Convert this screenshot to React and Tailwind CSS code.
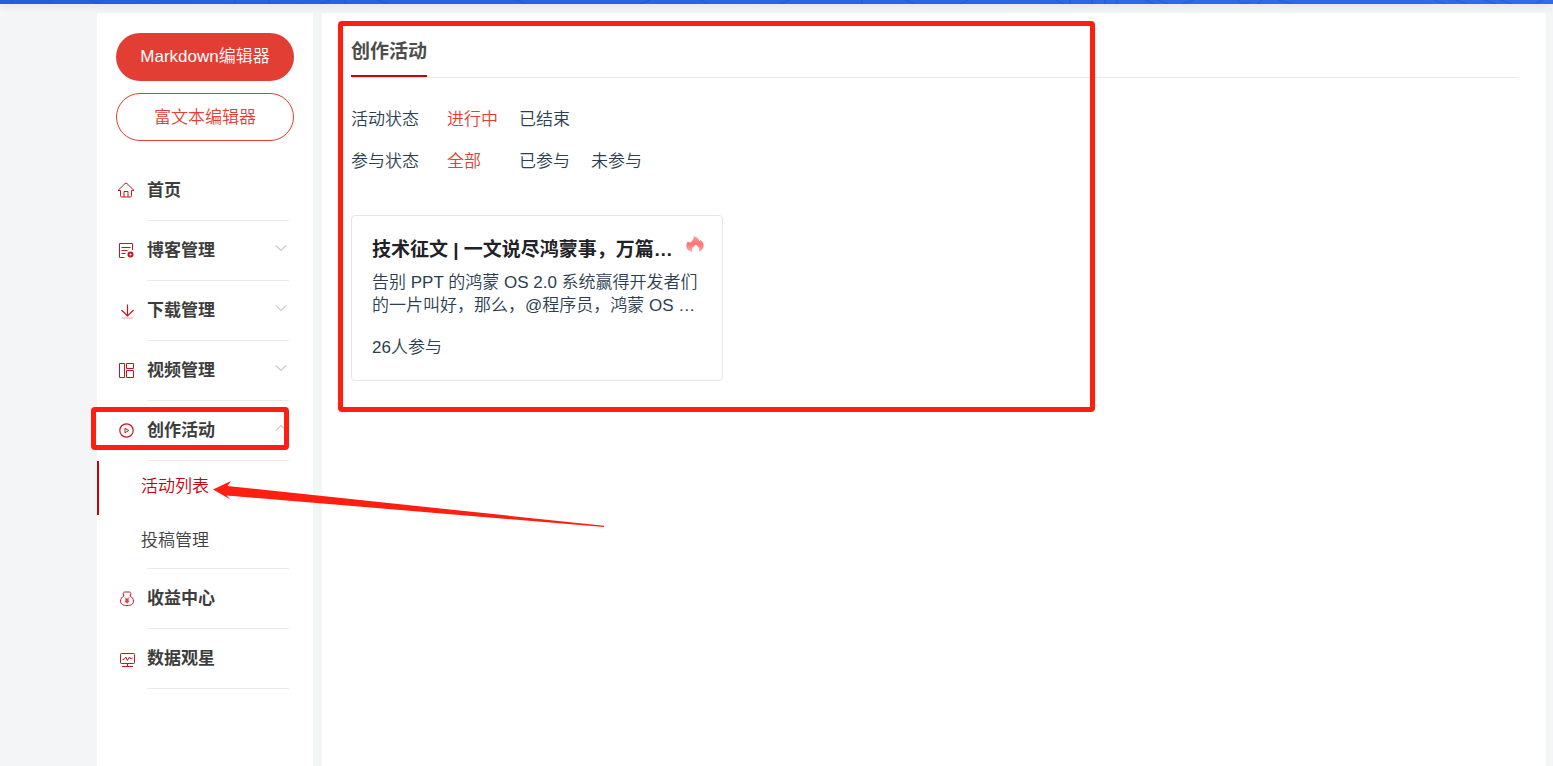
const HomeIcon = () => (
  <svg width="18" height="18" viewBox="0 0 18 18" fill="none" stroke="#c7141e">
    <path d="M1 9.500 8 2.600a1.400 1.400 0 0 1 2 0L17 9.500h-2.500M1 9.500h2.500v5.200a1.300 1.300 0 0 0 1.300 1.300h8.400a1.300 1.300 0 0 0 1.300-1.300V9.500" />
    <path d="M7 16v-5.500h4V16" />
  </svg>
);

const BlogIcon = () => (
  <svg width="18" height="18" viewBox="0 0 18 18" fill="none" stroke="#c7141e">
    <path d="M7.500 16.500h-5v-14h13v6.500M4.500 6.500h9M4.500 9.500h6M4.500 12.500h4" />
    <circle cx="13.500" cy="13.500" r="2" strokeWidth="2" />
  </svg>
);

const DownloadIcon = () => (
  <svg width="18" height="18" viewBox="0 0 18 18" fill="none" stroke="#c7141e">
    <path d="M10.500 3.500v11M4.500 9l6 6 6-6" strokeWidth="1.200" />
    <path d="M5 17h11" stroke="#eba1a5" />
  </svg>
);

const VideoIcon = () => (
  <svg width="18" height="18" viewBox="0 0 18 18" fill="none" stroke="#c7141e">
    <path d="M2.500 2.500h5v14h-5zM9.500 2.500h7v5h-7zM9.500 9.500h7v7h-7z" />
  </svg>
);

const ActivityIcon = () => (
  <svg width="18" height="18" viewBox="0 0 18 18" fill="none" stroke="#c7141e">
    <circle cx="9.500" cy="9.500" r="6.700" strokeWidth="1.200" />
    <path d="M8 7.300v4.400l3.800-2.200z" />
  </svg>
);

const IncomeIcon = () => (
  <svg width="18" height="18" viewBox="0 0 18 18" fill="none" stroke="#c7141e">
    <path d="M7 7.200 6 4.400 7.500 3h5L14 4.400l-1 2.800" />
    <path d="M7 6.800c-2 1.200-3.500 3.100-3.500 5.400 0 3 2.500 4.300 6.500 4.300s6.500-1.300 6.500-4.300c0-2.300-1.500-4.200-3.500-5.400" />
    <path d="m8 8.500 2 2 2-2M10 10.500v4M7.800 11h4.400M7.800 12.800h4.400" />
  </svg>
);

const DataIcon = () => (
  <svg width="18" height="18" viewBox="0 0 18 18" fill="none" stroke="#c7141e">
    <rect x="3.500" y="4.500" width="14" height="10" rx="0.800" />
    <path d="M5.500 10.500h1.500l1.800-2.500 1.700 3.500 2-3.500 1.500 2L15.500 9M10.500 14.500v3M5 17.500h11" />
  </svg>
);

const FireIcon = () => (
  <svg width="18" height="16" viewBox="0 0 18 16">
    <defs>
      <linearGradient id="fire" x1="0" y1="0" x2="0" y2="1">
        <stop offset="0" stopColor="#ff9c9c" />
        <stop offset="0.500" stopColor="#ff7474" />
        <stop offset="1" stopColor="#ffaaaa" />
      </linearGradient>
    </defs>
    <path
      fill="url(#fire)"
      d="M7.700 0c3 1.100 5.300 2.800 5.600 5 .6-.1 1-.5 1.300-1.100 2 1.500 3.100 3.700 3 6-.2 3-2.300 5.100-5.100 5.900.9-1.500 1-3 .1-4.400-.8-1.200-2-1.800-2.700-3.200-.6 1.600-2.200 2-3.300 3.400-.9 1.200-1 2.600-.1 4.200C2.500 15.200.3 12.800.3 10c0-2 .7-3.600 1.800-4.800.4.800 1 1.200 1.900 1.200C6.600 5 8 2.900 7.700 0z"
    />
  </svg>
);

const Chevron = ({ open }) => (
  <svg
    width="12"
    height="8"
    viewBox="0 0 12 8"
    fill="none"
    stroke="#a3a5a8"
    className="mr-0.5 mb-1.5"
  >
    <path d={open ? "M1 6.500l5-5 5 5" : "M1 1.500l5 5 5-5"} />
  </svg>
);

const Arrow = () => (
  <svg
    width="392"
    height="48"
    viewBox="0 0 392 48"
    className="absolute left-[116px] top-5 z-10 pointer-events-none"
    aria-hidden="true"
  >
    <path
      fill="#ff1f10"
      d="M0 8.500 18 0l-3.500 5L391 44.800v1.200L13.500 14.500 17.500 18.500z"
    />
  </svg>
);

const menu = [
  { name: "首页", icon: <HomeIcon /> },
  { name: "博客管理", icon: <BlogIcon />, arrow: true },
  { name: "下载管理", icon: <DownloadIcon />, arrow: true },
  { name: "视频管理", icon: <VideoIcon />, arrow: true },
  {
    name: "创作活动",
    icon: <ActivityIcon />,
    arrow: true,
    marked: true,
    children: ["活动列表", "投稿管理"],
  },
  { name: "收益中心", icon: <IncomeIcon /> },
  { name: "数据观星", icon: <DataIcon /> },
];

const filters = [
  { label: "活动状态", options: ["进行中", "已结束"] },
  { label: "参与状态", options: ["全部", "已参与", "未参与"] },
];

const TopBar = () => (
  <header className="relative z-10 h-1 bg-linear-to-r from-[#2360d8] to-[#2f6ce8] shadow-[0_2px_8px_rgba(0,0,0,0.12)]">
    <svg
      width="100%"
      height="4"
      fill="none"
      stroke="#1d55c8"
      strokeOpacity="0.600"
      className="block"
    >
      <path d="M10 4l4-4M48 4l3-4M90 0l10 4M235 0v4M269 0v4M320 4l10-4M345 0v4M377 0l12 4M515 0l12 4M640 4l10-4M700 0l8 4M780 4l9-4M862 0v4M905 0l10 4M960 4l8-4M1056 0l8 4M1070 0v4M1092 0v4M1105 0v4M1117 0v4M1145 0l10 4M1158 0l10 4M1182 4l12-4M1238 0c2 4 8 4 12 2M1258 4l4-4M1278 0l14 4M1434 0l12 4M1455 0l12 4M1484 0l12 4M1500 0l12 4M1535 4l8-4" />
    </svg>
  </header>
);

const Sidebar = () => (
  <aside className="w-[216px] shrink-0 bg-white pt-5">
    <div className="flex flex-col gap-3 px-[19px] mb-5">
      <button className="h-12 rounded-full bg-[#e33e33] text-white font-[350]">
        Markdown编辑器
      </button>
      <button className="h-12 pt-0.5 rounded-full border border-[#e33e33] text-[#e33e33] font-[350]">
        富文本编辑器
      </button>
    </div>
    <nav>
      <ul>
        {menu.map((item) => (
          <li key={item.name}>
            <a href="#" className="relative flex h-15 pl-5 pr-6">
              <span className="w-[30px] pb-0.5 flex items-center">
                {item.icon}
              </span>
              <span className="flex-1 flex items-center justify-between border-b border-[#ebebeb] font-bold text-[#3d3d3d]">
                {item.name}
                {item.arrow && <Chevron open={Boolean(item.children)} />}
              </span>
              {item.marked && (
                <span className="absolute -left-1.5 top-1.5 w-[198px] h-[43px] border-5 border-[#ff1f10] rounded" />
              )}
            </a>
            {item.children && (
              <ul className="relative">
                {item.children.map((child, index) => (
                  <li key={child}>
                    <a
                      href="#"
                      className={
                        "flex items-center h-[54px] pb-0.5 pl-[42px] border-l-2 font-[350] " +
                        (index === 0
                          ? "border-[#c7000b] text-[#c7000b]"
                          : "border-transparent text-[#3d3d3d]")
                      }
                    >
                      {child}
                    </a>
                  </li>
                ))}
                <li className="-mt-px ml-[50px] mr-6 border-b border-[#ebebeb]" />
                <li>
                  <Arrow />
                </li>
              </ul>
            )}
          </li>
        ))}
      </ul>
    </nav>
  </aside>
);

const ActivityCard = () => (
  <article className="w-[372px] h-[166px] mt-8 px-5 pt-5 border border-[#e6e6e6] rounded">
    <div className="flex justify-between items-start">
      <h2 className="text-[19px] leading-7 font-bold text-[#222226] whitespace-nowrap">
        技术征文 | 一文说尽鸿蒙事，万篇…
      </h2>
      <span className="-mr-0.5">
        <FireIcon />
      </span>
    </div>
    <p className="mt-[7px] leading-[23px] whitespace-nowrap">
      告别 PPT 的鸿蒙 OS 2.0 系统赢得开发者们
      <br />
      的一片叫好，那么，@程序员，鸿蒙 OS …
    </p>
    <p className="mt-[19px] leading-[23px]">26人参与</p>
  </article>
);

const Content = () => (
  <main className="relative flex-1 min-w-0 bg-white pl-[29px] pr-7 text-[#2c3e50] font-[350]">
    <div className="h-[65px] border-b border-[#e8e8e8]">
      <h1 className="inline-block h-16 pt-[25px] border-b-2 border-[#c7000b] text-[19px] leading-7 font-bold text-[#4d4d4d]">
        创作活动
      </h1>
    </div>
    <div className="pt-[21px]">
      {filters.map((filter) => (
        <div key={filter.label} className="flex items-center h-[42px]">
          <span className="w-24">{filter.label}</span>
          {filter.options.map((option, index) => (
            <button
              key={option}
              className={
                "w-18 text-left " + (index === 0 ? "text-[#e33e33]" : "")
              }
            >
              {option}
            </button>
          ))}
        </div>
      ))}
    </div>
    <ActivityCard />
    <div className="absolute left-4 top-2 w-[757px] h-[391px] border-5 border-[#ff1f10] rounded pointer-events-none" />
  </main>
);

export default function App() {
  return (
    <div className="min-h-screen flex flex-col bg-[#f4f5f7] text-[17px] leading-6 font-['Liberation_Sans','Noto_Sans_CJK_SC',sans-serif]">
      <TopBar />
      <div className="flex-1 flex gap-[9px] pt-[9px] pl-[97px] pr-[7px]">
        <Sidebar />
        <Content />
      </div>
    </div>
  );
}
